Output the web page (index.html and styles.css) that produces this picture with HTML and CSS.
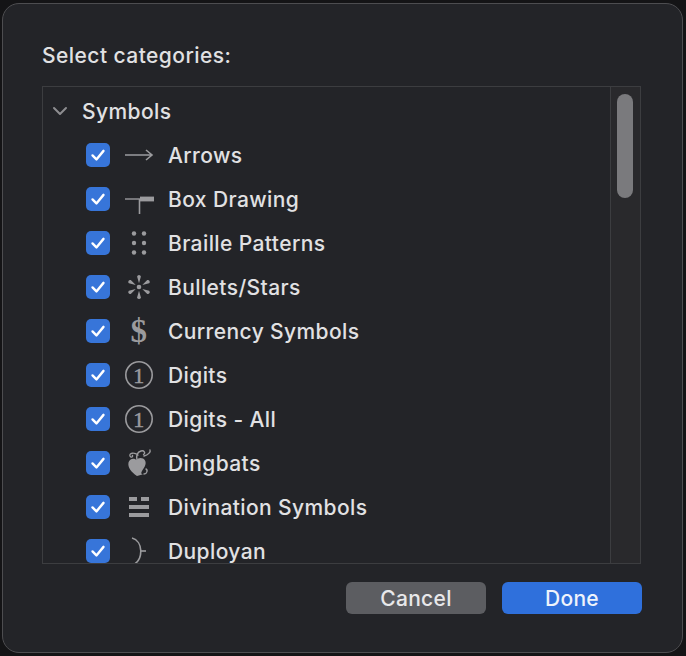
FILE: index.html
```html
<!doctype html>
<html lang="en">
<head>
    <meta charset="UTF-8">
    <title>Select categories</title>
    <link rel="stylesheet" href="styles.css">
</head>
<body>
<div class="sheet">
    <h1 class="title">Select categories:</h1>

    <div class="listbox">
        <div class="rows">
            <div class="group">
                <svg class="chevron" width="16" height="10" viewBox="0 0 16 10"><path d="M2 2 L8 8 L14 2" fill="none" stroke="#8d8d90" stroke-width="2" stroke-linecap="round" stroke-linejoin="round"/></svg>
                <span>Symbols</span>
            </div>

            <label class="row">
                <span class="check"><svg viewBox="0 0 24 24"><path d="M6 12.5 L10.3 16.8 L18 7.5" /></svg></span>
                <span class="icon"><svg width="30" height="14" viewBox="0 0 30 14"><path d="M1 7 H28 M22 2 L28 7 L22 12" fill="none" stroke="#9b9b9e" stroke-width="1.6"/></svg></span>
                <span class="name">Arrows</span>
            </label>
            <label class="row">
                <span class="check"><svg viewBox="0 0 24 24"><path d="M6 12.5 L10.3 16.8 L18 7.5" /></svg></span>
                <span class="icon"><svg width="32" height="32" viewBox="0 0 32 32"><path d="M2 16 H17" stroke="#9b9b9e" stroke-width="1.4"/><rect x="17" y="13.6" width="14" height="4.8" fill="#9b9b9e"/><path d="M16.5 16 V31" stroke="#9b9b9e" stroke-width="1.6"/></svg></span>
                <span class="name">Box Drawing</span>
            </label>
            <label class="row">
                <span class="check"><svg viewBox="0 0 24 24"><path d="M6 12.5 L10.3 16.8 L18 7.5" /></svg></span>
                <span class="icon"><svg width="20" height="26" viewBox="0 0 20 26" fill="#9b9b9e"><circle cx="5" cy="3.5" r="2.2"/><circle cx="15" cy="3.5" r="2.2"/><circle cx="5" cy="13" r="2.2"/><circle cx="15" cy="13" r="2.2"/><circle cx="5" cy="22.5" r="2.2"/><circle cx="15" cy="22.5" r="2.2"/></svg></span>
                <span class="name">Braille Patterns</span>
            </label>
            <label class="row">
                <span class="check"><svg viewBox="0 0 24 24"><path d="M6 12.5 L10.3 16.8 L18 7.5" /></svg></span>
                <span class="icon"><svg width="26" height="26" viewBox="-13 -13 26 26" fill="#9b9b9e">
                    <circle r="2.3"/>
                    <path id="spoke" d="M0 -3.8 L-1.9 -10.6 A1.95 1.95 0 0 1 1.9 -10.6 Z"/>
                    <use href="#spoke" transform="rotate(60)"/>
                    <use href="#spoke" transform="rotate(120)"/>
                    <use href="#spoke" transform="rotate(180)"/>
                    <use href="#spoke" transform="rotate(240)"/>
                    <use href="#spoke" transform="rotate(300)"/>
                </svg></span>
                <span class="name">Bullets/Stars</span>
            </label>
            <label class="row">
                <span class="check"><svg viewBox="0 0 24 24"><path d="M6 12.5 L10.3 16.8 L18 7.5" /></svg></span>
                <span class="icon glyph dollar">$</span>
                <span class="name">Currency Symbols</span>
            </label>
            <label class="row">
                <span class="check"><svg viewBox="0 0 24 24"><path d="M6 12.5 L10.3 16.8 L18 7.5" /></svg></span>
                <span class="icon"><svg width="30" height="30" viewBox="0 0 30 30"><circle cx="15" cy="15" r="13.2" fill="none" stroke="#9b9b9e" stroke-width="1.6"/><text x="15" y="22.5" text-anchor="middle" font-family="Liberation Serif, serif" font-size="22" stroke="#9b9b9e" stroke-width="0.5" fill="#9b9b9e">1</text></svg></span>
                <span class="name">Digits</span>
            </label>
            <label class="row">
                <span class="check"><svg viewBox="0 0 24 24"><path d="M6 12.5 L10.3 16.8 L18 7.5" /></svg></span>
                <span class="icon"><svg width="30" height="30" viewBox="0 0 30 30"><circle cx="15" cy="15" r="13.2" fill="none" stroke="#9b9b9e" stroke-width="1.6"/><text x="15" y="22.5" text-anchor="middle" font-family="Liberation Serif, serif" font-size="22" stroke="#9b9b9e" stroke-width="0.5" fill="#9b9b9e">1</text></svg></span>
                <span class="name">Digits - All</span>
            </label>
            <label class="row">
                <span class="check"><svg viewBox="0 0 24 24"><path d="M6 12.5 L10.3 16.8 L18 7.5" /></svg></span>
                <span class="icon"><svg width="30" height="30" viewBox="0 0 30 30">
                    <!-- heart body with a curled stem on top -->
                    <path d="M13 28 C7 24 3.5 19 4.5 14.5 C5.5 10.5 10 9.5 12.5 12 C14 9.5 19 9 21 12.5 C23 16 20 20 18 23 C16.5 25 17.5 27 20 26" fill="#9b9b9e"/>
                    <path d="M13 12 C12 7 14 4 17 3 M17 3 C20 2 22 5 19.5 6.5 M14 7 C10 4 5 5 6 8 C7 10 9 9 8.5 7.5 M20 8 C24 7 27 4 26 2" fill="none" stroke="#9b9b9e" stroke-width="1.4" stroke-linecap="round"/>
                    <path d="M20 26 C23 26 24 22 22 21" fill="none" stroke="#9b9b9e" stroke-width="1.4" stroke-linecap="round"/>
                </svg></span>
                <span class="name">Dingbats</span>
            </label>
            <label class="row">
                <span class="check"><svg viewBox="0 0 24 24"><path d="M6 12.5 L10.3 16.8 L18 7.5" /></svg></span>
                <span class="icon"><svg width="22" height="24" viewBox="0 0 22 24" fill="#9b9b9e"><rect x="1" y="2" width="8" height="4"/><rect x="13" y="2" width="8" height="4"/><rect x="1" y="10" width="20" height="4"/><rect x="1" y="18" width="20" height="4"/></svg></span>
                <span class="name">Divination Symbols</span>
            </label>
            <label class="row">
                <span class="check"><svg viewBox="0 0 24 24"><path d="M6 12.5 L10.3 16.8 L18 7.5" /></svg></span>
                <span class="icon"><svg width="24" height="32" viewBox="0 0 24 32"><path d="M5 3 C16 6 17 24 6 30" fill="none" stroke="#9b9b9e" stroke-width="1.6"/><path d="M13 16 H19" stroke="#9b9b9e" stroke-width="1.6"/></svg></span>
                <span class="name">Duployan</span>
            </label>
        </div>
        <div class="scrollbar">
            <div class="thumb"></div>
        </div>
    </div>

    <div class="buttons">
        <button class="btn cancel">Cancel</button>
        <button class="btn done">Done</button>
    </div>
</div>
</body>
</html>
```

FILE: styles.css
```css
* {
    box-sizing: border-box;
}
body {
    margin: 0;
    width: 686px;
    height: 656px;
    background: #141416;
    font-family: Inter, "Noto Sans", sans-serif;
    color: #e1e1e3;
    overflow: hidden;
}
.sheet {
    margin: 3px 3px 3px 2px;
    height: 650px;
    background: #232428;
    border: 1px solid #4d4d50;
    border-radius: 17px;
    padding: 38px 41px 0 39px;
}
.title {
    margin: 0;
    font-size: 21px;
    font-weight: 500;
    line-height: 28px;
    letter-spacing: 0.45px;
}
/* the framed list with its own scroller on the right */
.listbox {
    margin-top: 16px;
    height: 478px;
    border: 1px solid #3c3d40;
    display: flex;
    overflow: hidden;
}
.rows {
    flex: 1;
    padding-top: 2px;
    overflow: hidden;
}
.group,
.row {
    height: 44px;
    display: flex;
    align-items: center;
    font-size: 21px;
    font-weight: 500;
    letter-spacing: 0.4px;
}
.chevron {
    margin: 0 14px 0 9px;
}
.row {
    padding-left: 43px;
}
.check {
    flex: none;
    width: 24px;
    height: 24px;
    border-radius: 5px;
    background: #3775d9;
    display: flex;
    align-items: center;
    justify-content: center;
}
.check svg {
    width: 22px;
    height: 22px;
    fill: none;
    stroke: #ffffff;
    stroke-width: 2.6;
    stroke-linecap: round;
    stroke-linejoin: round;
}
.icon {
    flex: none;
    width: 34px;
    height: 34px;
    margin: 0 12px 0 12px;
    display: flex;
    align-items: center;
    justify-content: center;
    color: #9b9b9e;
}
.glyph {
    line-height: 34px;
}
.dollar {
    font-family: "Liberation Serif", serif;
    font-weight: bold;
    font-size: 33px;
}
.scrollbar {
    width: 30px;
    background: #29292c;
    border-left: 1px solid #3c3d40;
    padding: 7px 0 0 6px;
}
.thumb {
    width: 16px;
    height: 104px;
    border-radius: 8px;
    background: #7a7a7d;
}
.buttons {
    margin: 18px -1px 0 0;
    display: flex;
    justify-content: flex-end;
    gap: 16px;
}
.btn {
    width: 140px;
    height: 32px;
    border: none;
    border-radius: 6px;
    font-family: Inter, "Noto Sans", sans-serif;
    font-size: 21px;
    font-weight: 500;
    letter-spacing: 0.3px;
    color: #e8e8ea;
    padding: 0;
}
.cancel {
    background: #5c5d61;
}
.done {
    background: #2f70dc;
    color: #eef3fb;
}
```
